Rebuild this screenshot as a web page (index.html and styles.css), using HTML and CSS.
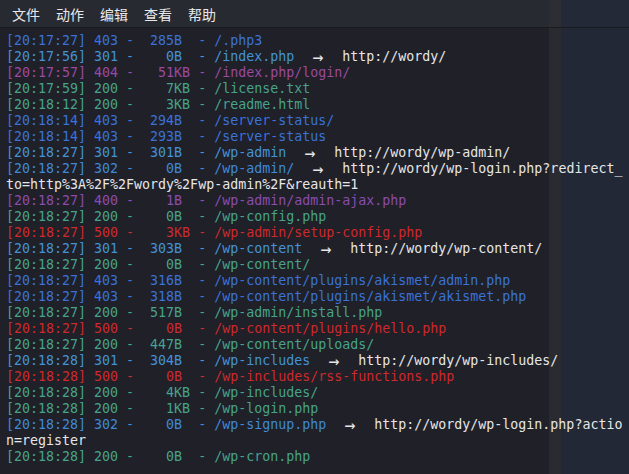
FILE: index.html
```html
<!DOCTYPE html>
<html>
  <head>
    <title>Terminal</title>
    <link rel="stylesheet" href="styles.css">
  </head>
  <body>
    <div class="menubar">
      <span class="menu-item">文件</span>
      <span class="menu-item">动作</span>
      <span class="menu-item">编辑</span>
      <span class="menu-item">查看</span>
      <span class="menu-item">帮助</span>
    </div>

    <div class="term">
      <div class="line s403">[20:17:27] 403 -  285B  - /.php3</div>
      <div class="line s301">[20:17:56] 301 -    0B  - /index.php  <span class="redir"><span class="arrow">→</span>  http://wordy/</span></div>
      <div class="line s404">[20:17:57] 404 -   51KB - /index.php/login/</div>
      <div class="line s200">[20:17:59] 200 -    7KB - /license.txt</div>
      <div class="line s200">[20:18:12] 200 -    3KB - /readme.html</div>
      <div class="line s403">[20:18:14] 403 -  294B  - /server-status/</div>
      <div class="line s403">[20:18:14] 403 -  293B  - /server-status</div>
      <div class="line s301">[20:18:27] 301 -  301B  - /wp-admin  <span class="redir"><span class="arrow">→</span>  http://wordy/wp-admin/</span></div>
      <div class="line s302">[20:18:27] 302 -    0B  - /wp-admin/  <span class="redir"><span class="arrow">→</span>  http://wordy/wp-login.php?redirect_</span></div>
      <div class="line redir">to=http%3A%2F%2Fwordy%2Fwp-admin%2F&amp;reauth=1</div>
      <div class="line s400">[20:18:27] 400 -    1B  - /wp-admin/admin-ajax.php</div>
      <div class="line s200">[20:18:27] 200 -    0B  - /wp-config.php</div>
      <div class="line s500">[20:18:27] 500 -    3KB - /wp-admin/setup-config.php</div>
      <div class="line s301">[20:18:27] 301 -  303B  - /wp-content  <span class="redir"><span class="arrow">→</span>  http://wordy/wp-content/</span></div>
      <div class="line s200">[20:18:27] 200 -    0B  - /wp-content/</div>
      <div class="line s403">[20:18:27] 403 -  316B  - /wp-content/plugins/akismet/admin.php</div>
      <div class="line s403">[20:18:27] 403 -  318B  - /wp-content/plugins/akismet/akismet.php</div>
      <div class="line s200">[20:18:27] 200 -  517B  - /wp-admin/install.php</div>
      <div class="line s500">[20:18:27] 500 -    0B  - /wp-content/plugins/hello.php</div>
      <div class="line s200">[20:18:27] 200 -  447B  - /wp-content/uploads/</div>
      <div class="line s301">[20:18:28] 301 -  304B  - /wp-includes  <span class="redir"><span class="arrow">→</span>  http://wordy/wp-includes/</span></div>
      <div class="line s500">[20:18:28] 500 -    0B  - /wp-includes/rss-functions.php</div>
      <div class="line s200">[20:18:28] 200 -    4KB - /wp-includes/</div>
      <div class="line s200">[20:18:28] 200 -    1KB - /wp-login.php</div>
      <div class="line s302">[20:18:28] 302 -    0B  - /wp-signup.php  <span class="redir"><span class="arrow">→</span>  http://wordy/wp-login.php?actio</span></div>
      <div class="line redir">n=register</div>
      <div class="line s200">[20:18:28] 200 -    0B  - /wp-cron.php</div>
    </div>
  </body>
</html>
```

FILE: styles.css
```css
html,
body {
  margin: 0;
  height: 100%;
}
body {
  background: linear-gradient(
    to right,
    #1f2028 0,
    #1f2028 549px,
    #2a2b31 549px,
    #2a2b31 561px,
    #222835 561px
  );
  overflow: hidden;
}
.menubar {
  height: 27px;
  display: flex;
  align-items: center;
  gap: 16px;
  padding-left: 12px;
  border-bottom: 1px solid #1a1b21;
  background: linear-gradient(
    to right,
    #282a31 0,
    #282a31 549px,
    #2d2e34 549px,
    #2d2e34 561px,
    #232936 561px
  );
  font-family: "Noto Sans CJK SC", "Noto Sans", sans-serif;
  font-size: 14px;
  color: #e8e8ea;
}
.term {
  padding: 5px 0 0 6px;
  font-family: "DejaVu Sans Mono", "Liberation Mono", monospace;
  font-size: 13.3px;
  line-height: 16px;
}
.line {
  white-space: pre;
  height: 16px;
}
.arrow {
  display: inline-block;
  width: 16px;
  height: 16px;
  text-align: center;
  font-size: 18px;
  line-height: 15px;
  vertical-align: top;
}
.redir {
  color: #e6e6e8;
}
.s200 {
  color: #47a38b;
}
.s301 {
  color: #4592d6;
}
.s302 {
  color: #4088d8;
}
.s403 {
  color: #3b72d8;
}
.s400 {
  color: #8a4cae;
}
.s404 {
  color: #9a4aa0;
}
.s500 {
  color: #cc2a2c;
}
```
